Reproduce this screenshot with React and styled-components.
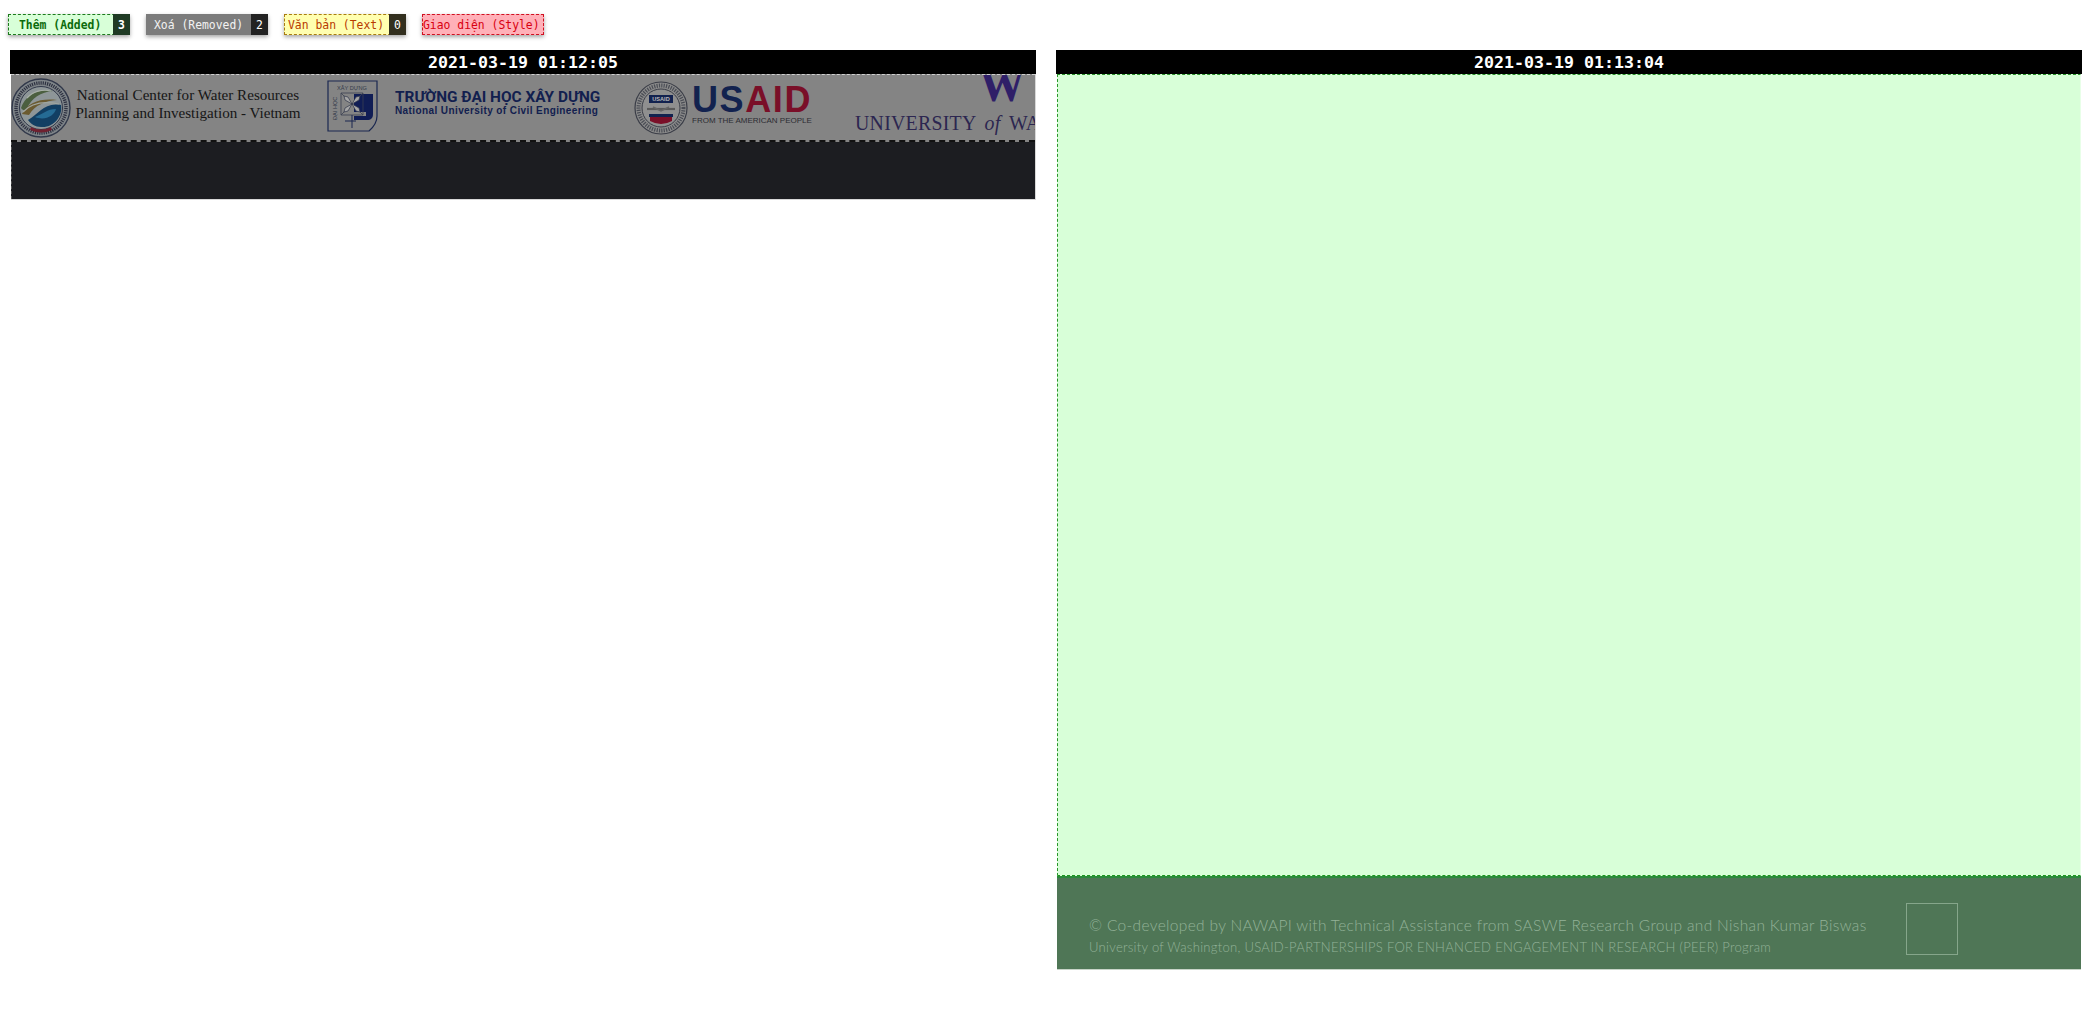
import React from "react";
import styled, { createGlobalStyle } from "styled-components";

const Global = createGlobalStyle`
  html, body { margin: 0; padding: 0; background: #fff; }
  body { font-family: "DejaVu Sans Mono", monospace; overflow: hidden; }
`;

const Page = styled.div`
  width: 2092px;
  height: 1011px;
  box-sizing: border-box;
  padding: 14px 10px 0;
`;

const Legend = styled.div`
  display: flex;
  gap: 16px;
  margin: 0 0 15px -2px;
`;

const Chip = styled.div`
  display: flex;
  align-items: center;
  justify-content: space-between;
  width: 122px;
  height: 21px;
  box-sizing: border-box;
  border: 1px dashed ${p => p.$border};
  background: ${p => p.$bg};
  color: ${p => p.$fg};
  font-size: 11.4px;
  font-weight: ${p => p.$bold ? 700 : 400};
  padding-left: ${p => p.$pad}px;
  box-shadow: 0 2px 4px rgba(0,0,0,.35);
  white-space: nowrap;
`;

const Count = styled.span`
  display: flex;
  align-items: center;
  justify-content: center;
  width: 17px;
  height: 21px;
  margin: -1px -1px -1px 0;
  background: ${p => p.$bg || "#222"};
  color: #fff;
  font-size: 11.4px;
`;

const Columns = styled.div`
  display: grid;
  grid-template-columns: 1026px 1026px;
  gap: 20px;
  align-items: start;
`;

const Header = styled.div`
  height: 24px;
  line-height: 25px;
  background: #000;
  color: #fff;
  text-align: center;
  font-size: 16.6px;
  font-weight: 700;
`;

const RemovedBox = styled.div`
  margin-left: 1px;
  width: 1024px;
  border-bottom: 1px solid #d8d8d8;
  border-right: 1px solid #d8d8d8;
  overflow: hidden;
`;

const Banner = styled.div`
  height: 68px;
  box-sizing: border-box;
  background: #848484;
  border-top: 1px dashed #d0d0d0;
  border-bottom: 2px dashed #111;
  display: flex;
  align-items: center;
  overflow: hidden;
  white-space: nowrap;
`;

const Dark = styled.div`
  height: 57px;
  background: #1c1d21;
  border-left: 1px dashed #555;
`;

const Seal = styled.svg`
  flex: none;
  display: block;
  margin-top: ${p => p.$up ? -p.$up : 0}px;
`;

const Nawapi = styled.div`
  margin-left: 4px;
  padding-bottom: 8px;
  width: 226px;
  font-family: "Liberation Serif", serif;
  font-size: 15.1px;
  line-height: 18px;
  color: #161616;
  text-align: center;
  flex: none;
`;

const NucePanel = styled.div`
  margin-left: 26px;
  display: flex;
  align-items: center;
  flex: none;
`;

const NuceText = styled.div`
  margin-left: 16px;
  padding-bottom: 10px;
  width: 206px;
  color: #12204f;
  font-weight: 700;
  flex: none;
`;

const NuceTitle = styled.div`
  font-family: Roboto, sans-serif;
  font-size: 15.4px;
  line-height: 16px;
  letter-spacing: 0;
`;

const NuceSub = styled.div`
  font-family: "Liberation Sans", sans-serif;
  font-size: 10px;
  line-height: 11px;
  letter-spacing: .4px;
`;

const UsaidPanel = styled.div`
  margin-left: 33px;
  display: flex;
  align-items: center;
  flex: none;
`;

const UsaidText = styled.div`
  margin-left: 4px;
  padding-bottom: 4px;
  font-family: "Liberation Sans", sans-serif;
  flex: none;
`;

const UsaidWord = styled.div`
  font-size: 36px;
  line-height: 30px;
  font-weight: 700;
  letter-spacing: 1.6px;
  color: #12224f;
  & > b { color: #7a0f28; font-weight: 700; }
`;

const UsaidSub = styled.div`
  font-size: 8px;
  line-height: 12px;
  color: #2c2c33;
`;

const Uw = styled.div`
  margin-left: 43px;
  flex: none;
  display: flex;
  flex-direction: column;
  height: 100%;
  align-items: flex-start;
  font-family: "Liberation Serif", serif;
  color: #2c2650;
`;

const UwMark = styled.div`
  margin: -7px 0 0 124px;
  font-size: 46px;
  line-height: 36px;
  font-weight: 700;
  color: #2f1f68;
`;

const UwWord = styled.div`
  margin-top: 9px;
  font-size: 22px;
  line-height: 20px;
  letter-spacing: .3px;
  word-spacing: 4px;
  transform: scaleX(.9);
  transform-origin: left center;
`;

const AddedBox = styled.div`
  margin-left: 1px;
  width: 1024px;
  height: 802px;
  box-sizing: border-box;
  background: #d8ffd8;
  border: 1px dashed #2a962a;
  border-bottom: 1px dashed #1d9a1d;
  border-right: 1px solid #e8ffe8;
`;

const Footer = styled.div`
  margin-left: 1px;
  width: 1024px;
  height: 94px;
  box-sizing: border-box;
  background: #4f7656;
  border-top: 2px solid #2a8a3a;
  border-bottom: 1px solid #c8d4c8;
  padding: 25px 0 0 32px;
  display: flex;
  align-items: flex-start;
  color: #93b298;
  font-family: Lato, sans-serif;
  font-weight: 300;
`;

const FooterText = styled.div`
  width: 817px;
  flex: none;
  padding-top: 12px;
`;

const FooterLine = styled.div`
  font-size: 15.5px;
  line-height: 20px;
  white-space: nowrap;
  letter-spacing: .33px;
`;

const FooterSub = styled.div`
  font-size: 13.05px;
  line-height: 20px;
  margin-top: 2px;
  white-space: nowrap;
  letter-spacing: .28px;
`;

const FooterLogo = styled.div`
  width: 50px;
  height: 50px;
  box-sizing: content-box;
  border: 1px solid #86a68b;
  flex: none;
`;

const NawapiSeal = () => (
  <Seal width="60" height="60" viewBox="0 0 60 60">
    <circle cx="30" cy="30" r="29" fill="#7e8488" stroke="#31384a" strokeWidth="1.4" />
    <circle cx="30" cy="30" r="25" fill="none" stroke="#2c3040" strokeWidth="3.4" strokeDasharray="1.2 1" />
    <circle cx="30" cy="30" r="21.5" fill="#8e9698" stroke="#31384a" strokeWidth="1" />
    <path d="M10 30C14 18 27 10 42 13C30 14 20 20 16 31C15 33 12 33 10 30Z" fill="#4b5f3f" />
    <path d="M11 36C17 24 30 20 46 22C34 23 24 27 18 37Z" fill="#6b5b31" />
    <path d="M17 42C28 36 33 24 50 27C52 38 43 50 30 49C24 49 20 46 17 42Z" fill="#123f63" />
    <path d="M24 39C32 36 36 31 45 31C43 38 34 43 24 39Z" fill="#256b94" />
    <path d="M16 20C22 13 32 11 40 13" fill="none" stroke="#a8b0a8" strokeWidth="1.2" />
    <path d="M12 34C20 25 33 23 48 26" fill="none" stroke="#a0a6a0" strokeWidth="1.2" />
    <path d="M20 49Q30 54 40 49L41 52Q30 57 19 52Z" fill="#6f2130" />
  </Seal>
);

const NuceMark = () => (
  <Seal $up={4} width="52" height="52" viewBox="0 0 52 52">
    <path d="M1 1H50V36Q50 44 42 51H1Z" fill="none" stroke="#1a2750" strokeWidth="1.2" />
    <path d="M27 14H46V34C46 38 44 40 40 40H27V36H39V32H27Z" fill="#101d55" />
    <path d="M14 13H36V35H14Z" fill="none" stroke="#3a4050" strokeWidth=".8" />
    <path d="M14 13L36 35M36 13L14 35" stroke="#3a4050" strokeWidth=".8" />
    <path d="M25 24L18 20L17 16L21 17ZM25 24L32 20L33 16L29 17ZM25 24L18 28L17 32L21 31ZM25 24L32 28L33 32L29 31Z" fill="#a6a6a6" stroke="#30364a" strokeWidth=".7" />
    <path d="M25 35V48M18 41H29" fill="none" stroke="#1a2750" strokeWidth="1" />
    <text x="10" y="10" fontSize="5.6" fill="#333a4a" fontFamily="Liberation Sans">XÂY DỰNG</text>
    <text x="0" y="0" fontSize="5.6" fill="#333a4a" fontFamily="Liberation Sans" transform="translate(10 40) rotate(-90)">ĐẠI HỌC</text>
  </Seal>
);

const UsaidSeal = () => (
  <Seal width="54" height="54" viewBox="0 0 54 54">
    <circle cx="27" cy="27" r="26" fill="#8a8a8a" stroke="#3a3d47" strokeWidth="1.2" />
    <circle cx="27" cy="27" r="22.5" fill="none" stroke="#3a3d47" strokeWidth="4" strokeDasharray="1.2 1.2" opacity=".8" />
    <circle cx="27" cy="27" r="19" fill="#8f8f8f" stroke="#3a3d47" strokeWidth="1" />
    <rect x="15" y="14" width="24" height="8" fill="#12224f" />
    <text x="27" y="20.3" textAnchor="middle" fontSize="5.6" fontWeight="700" fill="#bbb" fontFamily="Liberation Sans">USAID</text>
    <path d="M13 28H41" stroke="#5a5a5a" strokeWidth="2.2" />
    <path d="M19 26L27 30L35 26" fill="none" stroke="#666" strokeWidth="1.4" />
    <rect x="15" y="33" width="24" height="3" fill="#12224f" />
    <path d="M16 36H38V40Q27 46 16 40Z" fill="#7a0f28" />
  </Seal>
);

function Panel({ time, children }) {
  return (
    <div>
      <Header>{time}</Header>
      {children}
    </div>
  );
}

export default function App() {
  return (
    <Page>
      <Global />
      <Legend>
        <Chip $bg="#d8ffd8" $border="#1d7a1d" $fg="#0b6b0b" $bold $pad={10}>Thêm (Added)<Count $bg="#1f3a24">3</Count></Chip>
        <Chip $bg="#7c7c7c" $border="#7c7c7c" $fg="#f2f2f2" $pad={7}>Xoá (Removed)<Count>2</Count></Chip>
        <Chip $bg="#ffffb0" $border="#a87c10" $fg="#b83a00" $pad={3}>Văn bản (Text)<Count $bg="#322f1e">0</Count></Chip>
        <Chip $bg="#ffb0b8" $border="#d01020" $fg="#d80010" $pad={0}>Giao diện (Style)</Chip>
      </Legend>
      <Columns>
        <Panel time="2021-03-19 01:12:05">
          <RemovedBox>
            <Banner>
              <NawapiSeal />
              <Nawapi>National Center for Water Resources<br />Planning and Investigation - Vietnam</Nawapi>
              <NucePanel>
                <NuceMark />
                <NuceText>
                  <NuceTitle>TRƯỜNG ĐẠI HỌC XÂY DỰNG</NuceTitle>
                  <NuceSub>National University of Civil Engineering</NuceSub>
                </NuceText>
              </NucePanel>
              <UsaidPanel>
                <UsaidSeal />
                <UsaidText>
                  <UsaidWord>US<b>AID</b></UsaidWord>
                  <UsaidSub>FROM THE AMERICAN PEOPLE</UsaidSub>
                </UsaidText>
              </UsaidPanel>
              <Uw>
                <UwMark>W</UwMark>
                <UwWord>UNIVERSITY <i>of</i> WASHINGTON</UwWord>
              </Uw>
            </Banner>
            <Dark />
          </RemovedBox>
        </Panel>
        <Panel time="2021-03-19 01:13:04">
          <AddedBox />
          <Footer>
            <FooterText>
              <FooterLine>© Co-developed by NAWAPI with Technical Assistance from SASWE Research Group and Nishan Kumar Biswas</FooterLine>
              <FooterSub>University of Washington, USAID-PARTNERSHIPS FOR ENHANCED ENGAGEMENT IN RESEARCH (PEER) Program</FooterSub>
            </FooterText>
            <FooterLogo />
          </Footer>
        </Panel>
      </Columns>
    </Page>
  );
}
